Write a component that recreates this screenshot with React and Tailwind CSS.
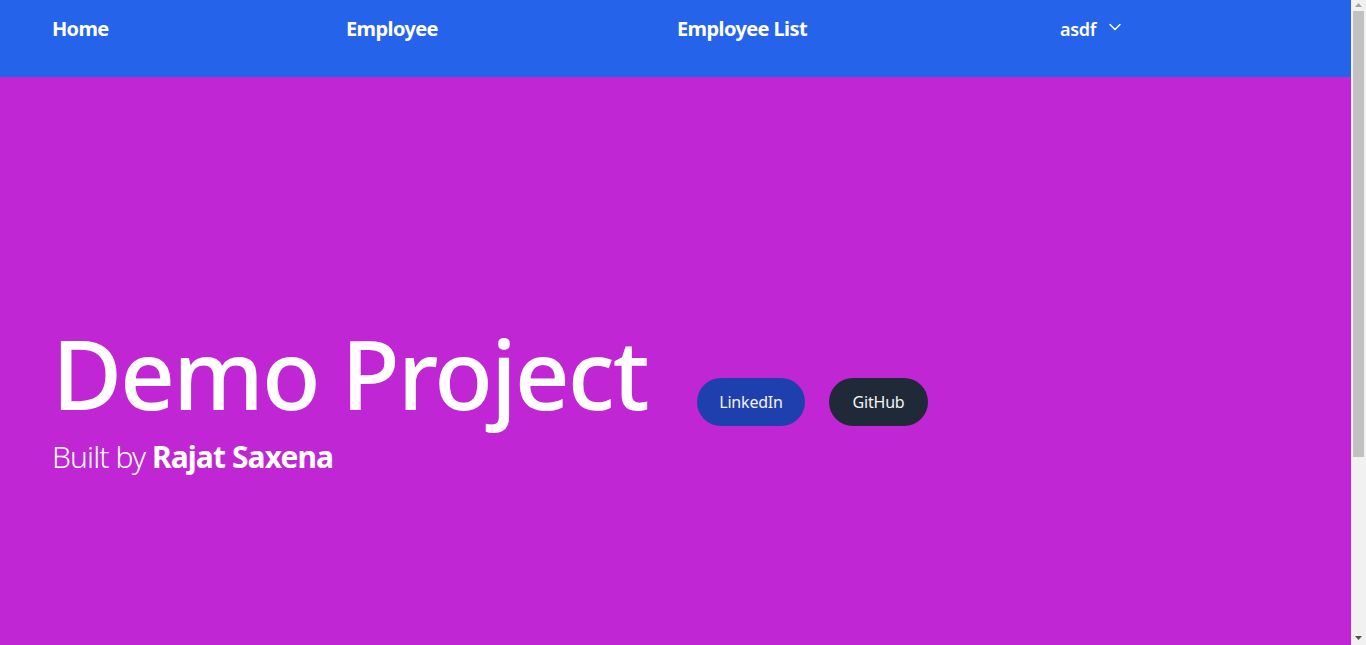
import React from "react";
import { ChevronDown } from "lucide-react";

function NavBar() {
  return (
    <nav className="h-[77px] bg-[#2563eb] pl-[52px] pt-[15px] text-white">
      <ul className="flex items-start">
        <li className="w-[294px] text-xl font-bold leading-7 tracking-[-0.7px]">Home</li>
        <li className="w-[331px] text-xl font-bold leading-7 tracking-[-0.6px]">Employee</li>
        <li className="w-[383px] text-xl font-bold leading-7 tracking-[-0.6px]">Employee List</li>
        <li className="flex items-center gap-[9px] text-lg font-semibold leading-7 tracking-[-0.3px]">
          asdf
          <ChevronDown className="-mt-[4px] h-5 w-5" strokeWidth={1.8} />
        </li>
      </ul>
    </nav>
  );
}

function Hero() {
  return (
    <section className="flex h-screen flex-col justify-center bg-[#c026d3] px-[52px] text-white">
      <div className="flex items-end">
        <h1 className="w-[596px] whitespace-nowrap text-8xl font-medium leading-none tracking-[-2.1px]">
          Demo Project
        </h1>
        <div className="-mb-[5px] ml-[49px] flex gap-6">
          <button className="h-12 w-[108px] rounded-full bg-[#1e40af] text-base tracking-[-0.2px] text-gray-100">
            LinkedIn
          </button>
          <button className="h-12 w-[99px] rounded-full bg-[#1f2937] text-base tracking-[-0.2px] text-gray-100">
            GitHub
          </button>
        </div>
      </div>
      <p className="mt-[18px] text-3xl font-light tracking-[-0.9px]">
        Built by <span className="font-bold">Rajat Saxena</span>
      </p>
    </section>
  );
}

// drawn page scrollbar, as it shows in the screenshot
function ScrollBar() {
  return (
    <div className="flex h-screen w-[15px] flex-col items-center bg-[#f1f1f1]">
      <svg width="15" height="11" viewBox="0 0 15 11" className="shrink-0">
        <path d="M7.5 3 L11 7 L4 7 Z" fill="#a3a3a3" />
      </svg>
      <div className="h-[446px] w-[11px] bg-[#c1c1c1]" />
      <div className="flex-1" />
      <svg width="15" height="13" viewBox="0 0 15 13" className="shrink-0">
        <path d="M4 4 L11 4 L7.5 8 Z" fill="#505050" />
      </svg>
    </div>
  );
}

export default function App() {
  return (
    <div className="flex h-screen overflow-hidden font-['Noto_Sans',sans-serif]">
      <main className="flex-1 overflow-hidden">
        <NavBar />
        <Hero />
        <div className="h-[173px] bg-[#c026d3]" />
      </main>
      <ScrollBar />
    </div>
  );
}
